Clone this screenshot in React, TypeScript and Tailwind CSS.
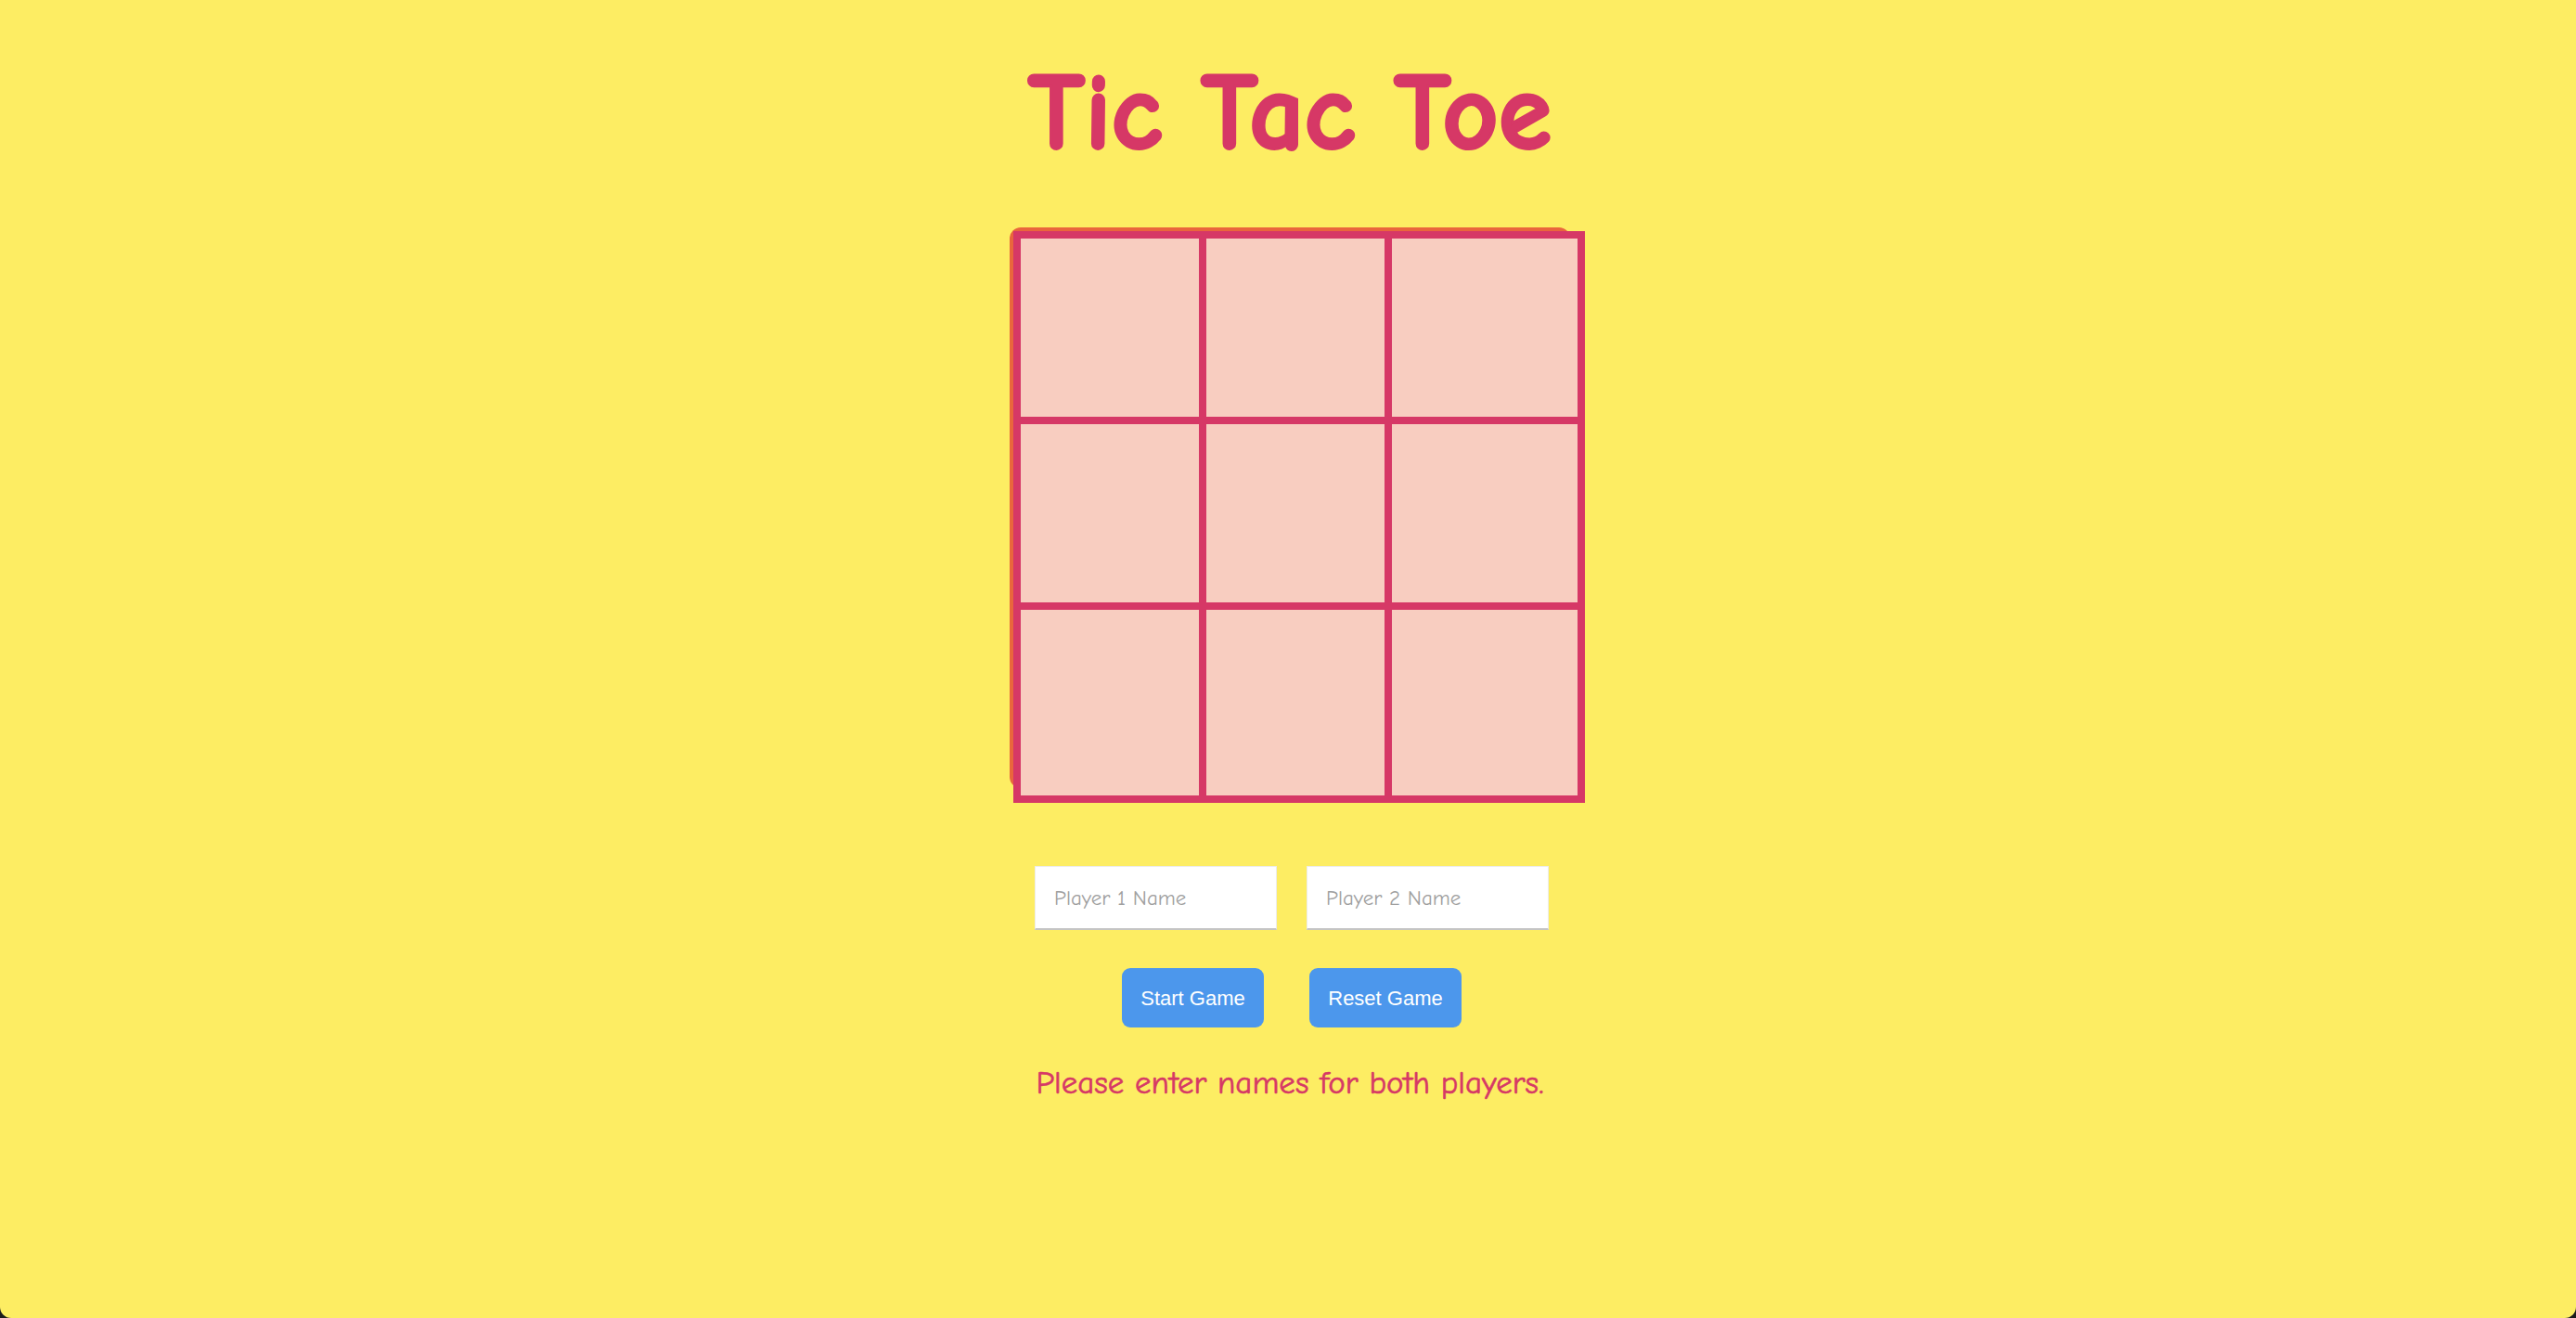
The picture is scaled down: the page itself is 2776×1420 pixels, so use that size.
import React, { useState } from 'react';

const comic = { fontFamily: '"Comic Sans MS", "Comic Neue", "Noto Sans", sans-serif' };

const App: React.FC = () => {
  const [board, setBoard] = useState<string[]>(Array(9).fill(''));
  const [p1, setP1] = useState('');
  const [p2, setP2] = useState('');
  const [turn, setTurn] = useState('X');
  const [started, setStarted] = useState(false);
  const [message, setMessage] = useState('Please enter names for both players.');

  const cellSize = (i: number) => {
    const col = i % 3;
    const row = Math.floor(i / 3);
    return [col === 2 ? 'w-[200px]' : 'w-[192px]', row === 2 ? 'h-[200px]' : 'h-[192px]'].join(' ');
  };

  const play = (i: number) => {
    if (!started || board[i]) return;
    const next = [...board];
    next[i] = turn;
    setBoard(next);
    setTurn(turn === 'X' ? 'O' : 'X');
  };

  const start = () => {
    if (!p1 || !p2) {
      setMessage('Please enter names for both players.');
      return;
    }
    setStarted(true);
    setMessage(`${p1}'s turn (X)`);
  };

  const reset = () => {
    setBoard(Array(9).fill(''));
    setTurn('X');
    setStarted(false);
    setMessage('Please enter names for both players.');
  };

  return (
    <div className="w-full h-[1420px] bg-[#1c1c1c]">
      <div className="w-full h-full bg-[#fded63] rounded-b-[12px] flex flex-col items-center pl-1" style={comic}>
        {/* Title */}
        <h1 className="mt-[64px] text-[117px] leading-none font-bold text-[#d63866] [-webkit-text-stroke:3px_#d63866]">
          Tic Tac Toe
        </h1>

        {/* Board */}
        <div className="mt-[64px] w-[604px] h-[604px] bg-[#e9663c] rounded-[12px]">
          <div className="ml-1 mt-1 w-[616px] p-2 bg-[#d63866] grid grid-cols-[192px_192px_200px] gap-2">
            {board.map((v, i) => (
              <button
                key={i}
                onClick={() => play(i)}
                className={`${cellSize(i)} bg-[#f8cdc0] text-[#d63866] text-[96px] font-bold flex items-center justify-center`}
              >
                {v}
              </button>
            ))}
          </div>
        </div>

        {/* Players */}
        <div className="mt-[84px] flex gap-8 ml-1">
          <input
            value={p1}
            onChange={(e) => setP1(e.target.value)}
            placeholder="Player 1 Name"
            className="w-[261px] h-[69px] px-5 bg-white text-[23px] text-[#333] placeholder:text-[#a0a0a0] border border-[#ececec] border-b-2 border-b-[#c4c4c4] outline-none"
          />
          <input
            value={p2}
            onChange={(e) => setP2(e.target.value)}
            placeholder="Player 2 Name"
            className="w-[261px] h-[69px] px-5 bg-white text-[23px] text-[#333] placeholder:text-[#a0a0a0] border border-[#ececec] border-b-2 border-b-[#c4c4c4] outline-none"
          />
        </div>

        {/* Buttons */}
        <div className="mt-[41px] flex gap-[49px] ml-1 font-['Liberation_Sans',Arial,sans-serif]">
          <button onClick={start} className="w-[153px] h-[64px] rounded-[9px] bg-[#4c97ec] text-white text-[22px]">
            Start Game
          </button>
          <button onClick={reset} className="w-[164px] h-[64px] rounded-[9px] bg-[#4c97ec] text-white text-[22px]">
            Reset Game
          </button>
        </div>

        {/* Status */}
        <p className="mt-[42px] text-[35px] leading-none text-[#d63866] [-webkit-text-stroke:0.6px_#d63866]">{message}</p>
      </div>
    </div>
  );
};

export default App;
